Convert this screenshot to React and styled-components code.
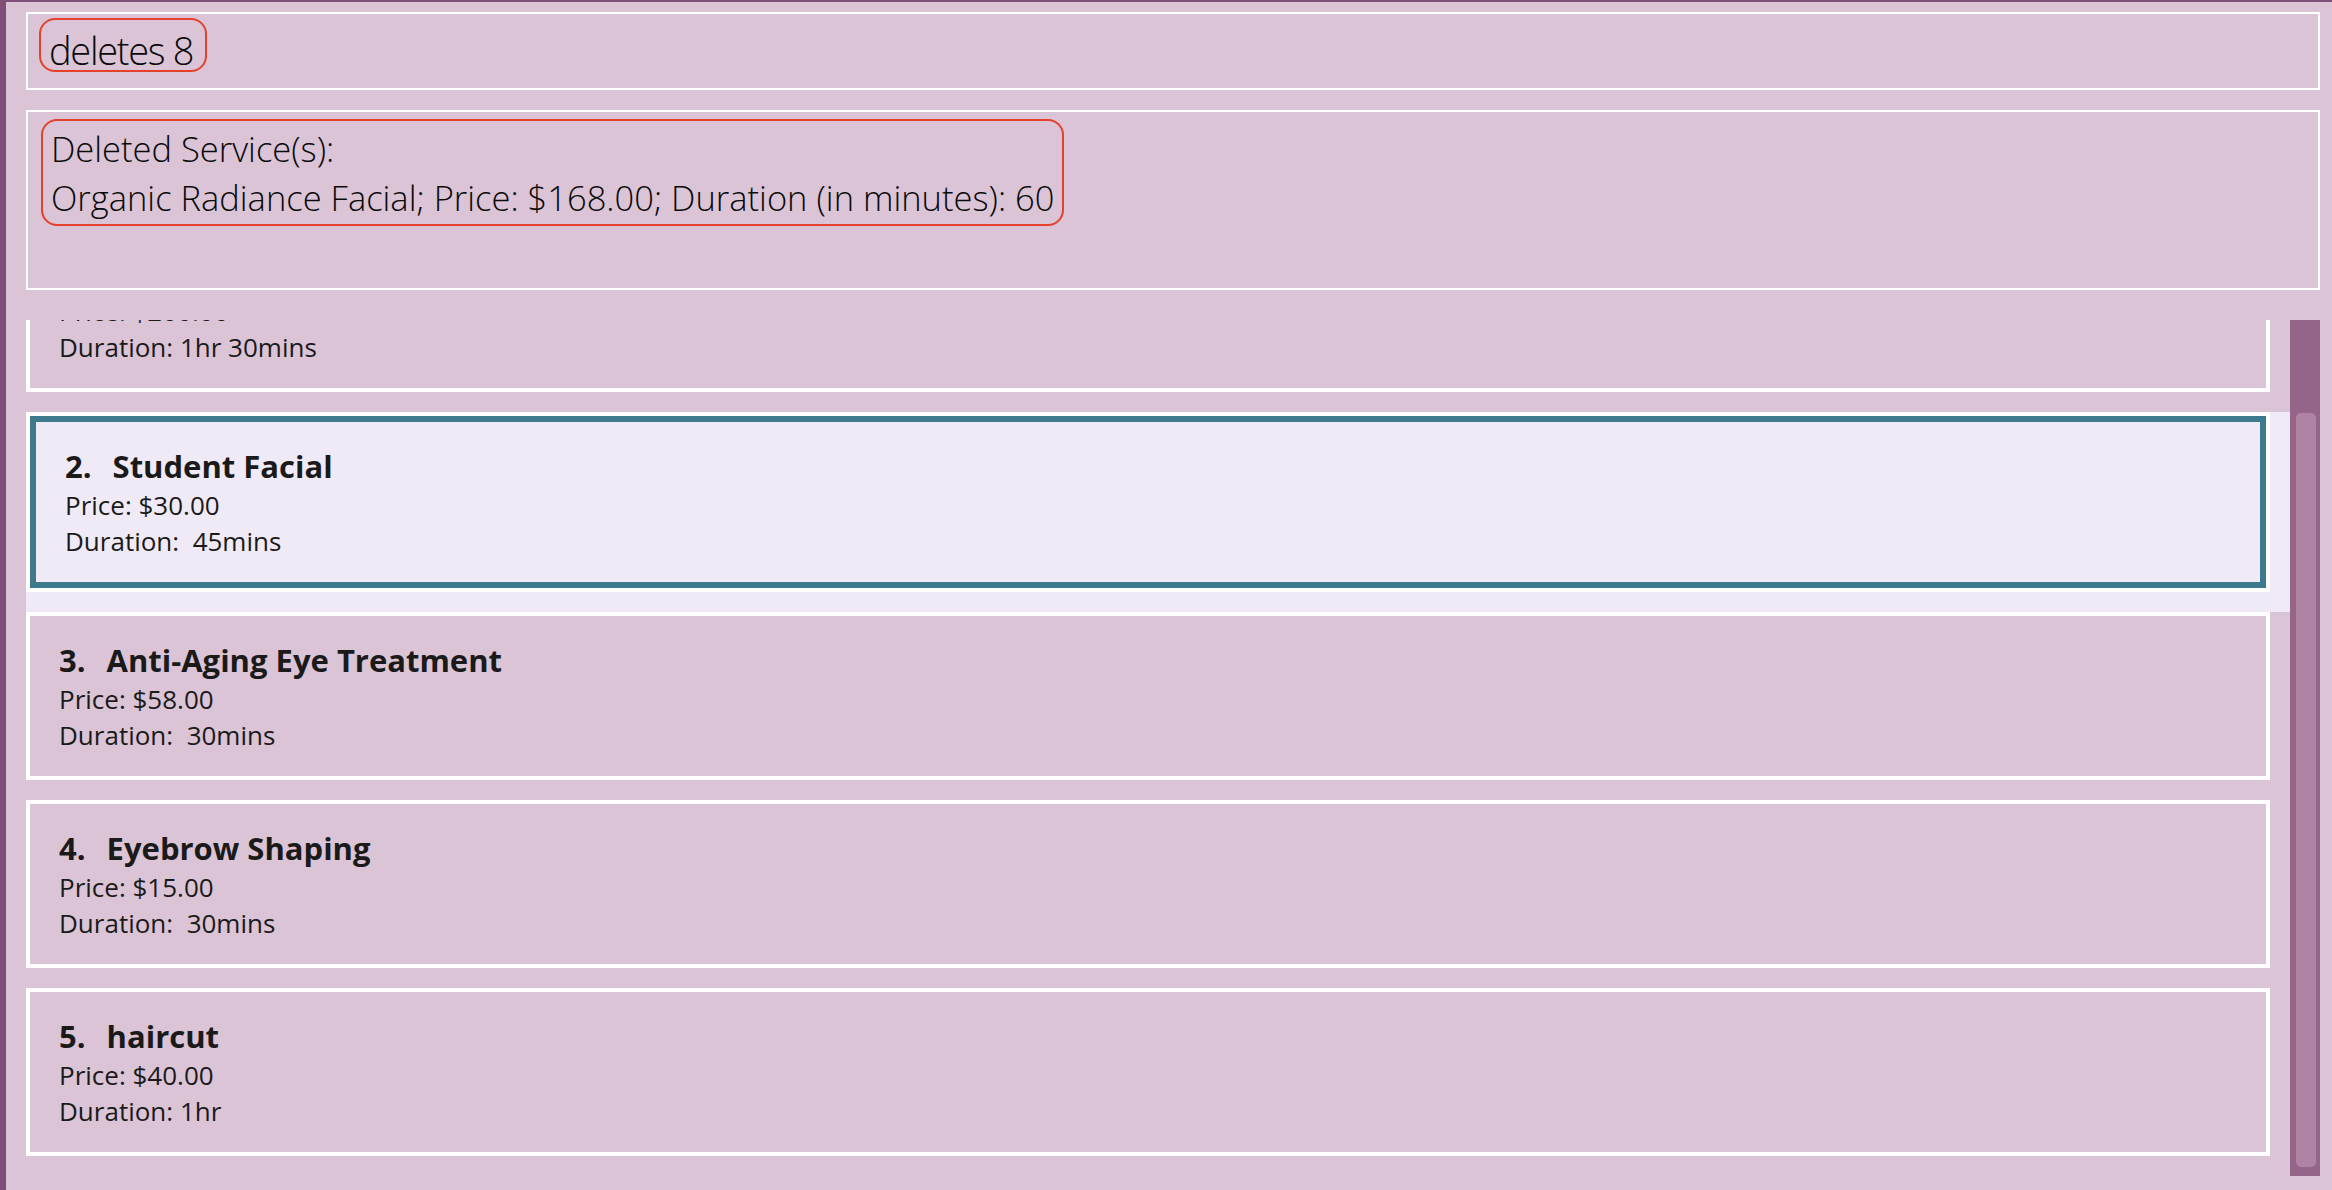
import React, { useLayoutEffect, useRef } from 'react';
import styled, { createGlobalStyle } from 'styled-components';

const GlobalStyle = createGlobalStyle`
  html, body {
    margin: 0;
    padding: 0;
    background: #dac4d6;
  }
  body {
    font-family: "Open Sans", "Noto Sans", sans-serif;
    overflow: hidden;
  }
  * { box-sizing: border-box; }
`;

const Window = styled.div`
  width: 2332px;
  height: 1190px;
  border-left: 6px solid #7f4f78;
  border-top: 2px solid #7f4f78;
  background: #dac4d6;
  padding: 10px 12px 14px 20px;
  display: flex;
  flex-direction: column;
`;

const CommandBox = styled.div`
  height: 78px;
  flex: none;
  border: 2px solid #ffffff;
  padding: 4px 0 0 11px;
  display: flex;
  align-items: flex-start;
`;

const Pill = styled.div`
  border: 2px solid #e5402a;
  border-radius: 16px;
  color: #0a0a0a;
  font-family: "Open Sans", "Noto Sans", sans-serif;
  font-weight: 300;
  white-space: pre;
`;

const CommandPill = styled(Pill)`
  height: 54px;
  padding: 5px 12px 0 8px;
  font-size: 38px;
  letter-spacing: -1.3px;
  line-height: 50px;
`;

const ResultBox = styled.div`
  height: 180px;
  flex: none;
  margin-top: 20px;
  border: 2px solid #ffffff;
  padding: 7px 0 0 13px;
  display: flex;
  align-items: flex-start;
`;

const ResultPill = styled(Pill)`
  padding: 3px 8px 2px 8px;
  font-size: 34.5px;
  line-height: 49px;
`;

const ListArea = styled.div`
  flex: 1;
  min-height: 0;
  margin-top: 30px;
  display: flex;
`;

const ListViewport = styled.div`
  flex: 1;
  min-width: 0;
  overflow-y: scroll;
  scrollbar-width: none;
  &::-webkit-scrollbar { display: none; }
`;

const Cell = styled.div`
  padding: 0 20px 20px 0;
  background: ${(p) => (p.$selected ? '#f0eaf6' : 'transparent')};
`;

const Card = styled.div`
  border: 4px solid #ffffff;
`;

const CardInner = styled.div`
  height: ${(p) => (p.$selected ? '172px' : '160px')};
  border: ${(p) => (p.$selected ? '6px solid #3e7a8d' : 'none')};
  padding: 23px 0 0 29px;
  color: #1a1a1a;
  font-family: "Open Sans", "Noto Sans", sans-serif;
`;

const Title = styled.div`
  display: flex;
  font-size: 31px;
  font-weight: 700;
  line-height: 42px;
  white-space: pre;
`;

const Index = styled.span`
  padding-right: 21px;
`;

const Detail = styled.div`
  font-size: 26px;
  font-weight: 400;
  line-height: 36px;
  white-space: pre;
`;

const Track = styled.div`
  width: 30px;
  flex: none;
  background: #946489;
  padding: ${(p) => p.$offset}px 4px 0 6px;
`;

const Thumb = styled.div`
  height: ${(p) => p.$size}px;
  border-radius: 5px;
  background: #af83a3;
`;

const services = [
  { name: 'Signature Facial', price: '$200.00', duration: '1hr 30mins' },
  { name: 'Student Facial', price: '$30.00', duration: ' 45mins' },
  { name: 'Anti-Aging Eye Treatment', price: '$58.00', duration: ' 30mins' },
  { name: 'Eyebrow Shaping', price: '$15.00', duration: ' 30mins' },
  { name: 'haircut', price: '$40.00', duration: '1hr' },
];

export default function App() {
  const listRef = useRef(null);
  useLayoutEffect(() => {
    if (listRef.current) listRef.current.scrollTop = 96;
  }, []);

  return (
    <>
      <GlobalStyle />
      <Window>
        <CommandBox>
          <CommandPill>deletes 8</CommandPill>
        </CommandBox>
        <ResultBox>
          <ResultPill>
            {'Deleted Service(s):\nOrganic Radiance Facial; Price: $168.00; Duration (in minutes): 60'}
          </ResultPill>
        </ResultBox>
        <ListArea>
          <ListViewport ref={listRef}>
            {services.map((s, i) => {
              const selected = i === 1;
              return (
                <Cell key={s.name} $selected={selected}>
                  <Card>
                    <CardInner $selected={selected}>
                      <Title>
                        <Index>{`${i + 1}.`}</Index>
                        <span>{s.name}</span>
                      </Title>
                      <Detail>{`Price: ${s.price}`}</Detail>
                      <Detail>{`Duration: ${s.duration}`}</Detail>
                    </CardInner>
                  </Card>
                </Cell>
              );
            })}
          </ListViewport>
          <Track $offset={93}>
            <Thumb $size={754} />
          </Track>
        </ListArea>
      </Window>
    </>
  );
}
